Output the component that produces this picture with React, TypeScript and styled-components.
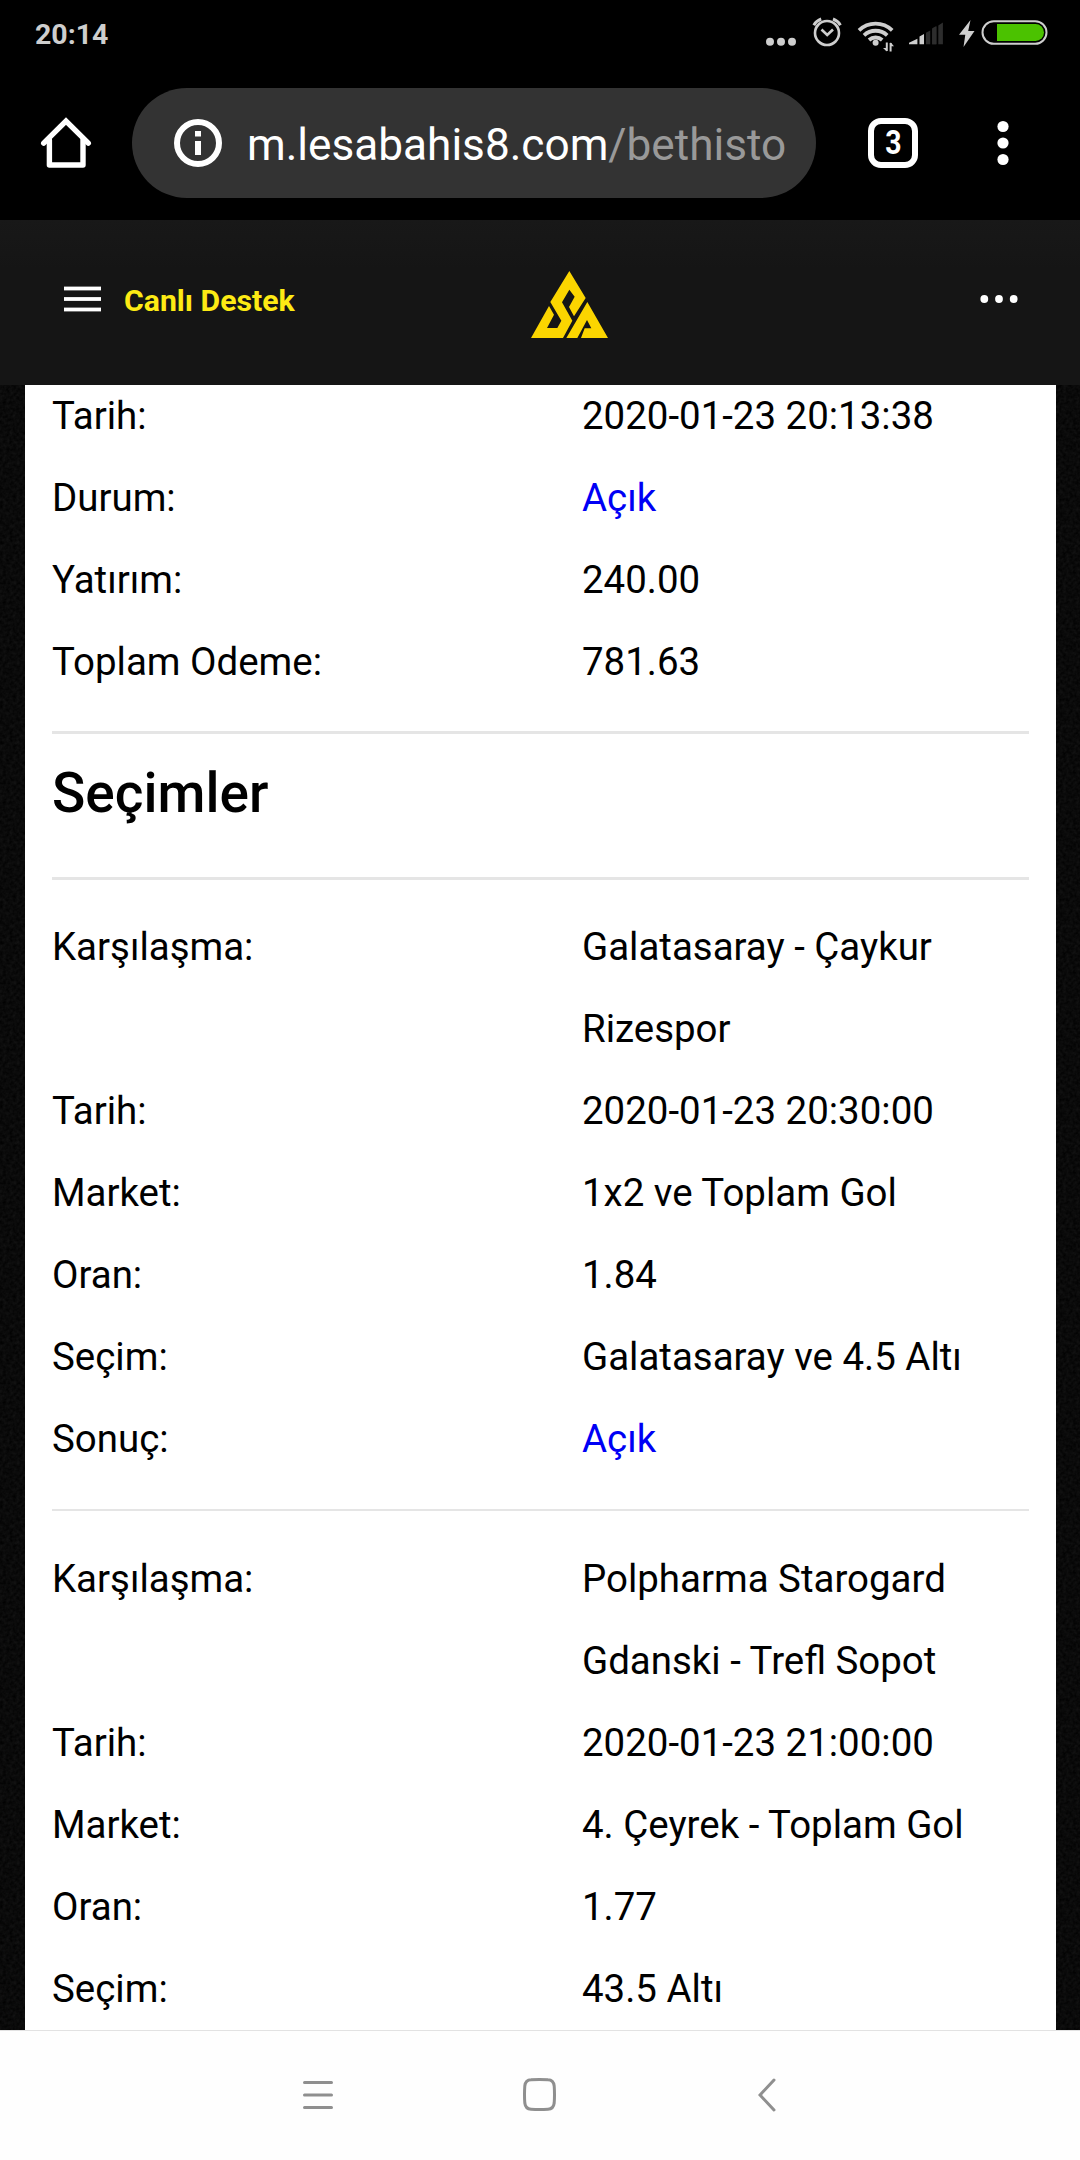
import React from "react";
import styled, { createGlobalStyle } from "styled-components";

const Global = createGlobalStyle`
  * { box-sizing: border-box; }
  html, body { margin: 0; background: #000; }
  body { font-family: Roboto, "Noto Sans", sans-serif; overflow: hidden; }
  svg { display: block; flex: none; }
`;

const grain = encodeURIComponent(
  `<svg xmlns="http://www.w3.org/2000/svg" width="200" height="200"><filter id="n" x="0" y="0" width="100%" height="100%" color-interpolation-filters="sRGB"><feTurbulence type="fractalNoise" baseFrequency="0.3" numOctaves="2" stitchTiles="stitch"/><feColorMatrix values="0.09 0 0 0 -0.006  0.09 0 0 0 -0.006  0.09 0 0 0 -0.006  0 0 0 0 1"/></filter><rect width="200" height="200" filter="url(#n)"/></svg>`
);

const Screen = styled.div`
  width: 1080px;
  height: 2160px;
  display: flex;
  flex-direction: column;
  overflow: hidden;
  background: #000;
`;

const StatusBar = styled.div`
  height: 66px;
  flex: none;
  display: flex;
  justify-content: space-between;
  align-items: center;
  padding: 2px 32px 0 35px;
  color: #cecece;
`;

const Clock = styled.span`
  font-size: 28.5px;
  font-weight: 700;
  line-height: 34px;
  padding-top: 1px;
`;

const BrowserBar = styled.div`
  height: 154px;
  flex: none;
  display: flex;
  align-items: flex-start;
  padding: 22px 0 0 40px;
`;

const IconSlot = styled.div<{ $ml?: number }>`
  height: 110px;
  display: flex;
  align-items: center;
  margin-left: ${(p) => p.$ml ?? 0}px;
`;

const UrlPill = styled.div`
  width: 684px;
  height: 110px;
  margin-left: 40px;
  border-radius: 55px;
  background: #333;
  display: flex;
  align-items: center;
  padding-left: 42px;
`;

const Url = styled.span`
  margin-left: 25px;
  padding-top: 3px;
  font-size: 44.15px;
  line-height: 60px;
  white-space: nowrap;
  color: #fff;
`;

const UrlPath = styled.span`
  color: #999;
`;

const TabCount = styled.div`
  width: 50px;
  height: 50px;
  border: 6px solid #fff;
  border-radius: 13px;
  display: flex;
  align-items: center;
  justify-content: center;
  color: #fff;
  font-size: 33px;
  font-weight: 700;
  line-height: 38px;
`;

const TabDigit = styled.span`
  transform: scaleX(0.86);
`;

const SiteHeader = styled.header`
  height: 165px;
  flex: none;
  display: flex;
  align-items: center;
  background: linear-gradient(#181818, #151515 30%, #151515);
  padding: 0 62px 7px 64px;
`;

const HeaderSide = styled.div<{ $end?: boolean }>`
  flex: 1;
  display: flex;
  align-items: center;
  justify-content: ${(p) => (p.$end ? "flex-end" : "flex-start")};
`;

const Support = styled.span`
  margin-left: 23px;
  color: #fdea14;
  font-size: 30.2px;
  font-weight: 700;
  line-height: 36px;
  padding-top: 3px;
`;

const LogoBox = styled.div`
  padding: 12px 0 0 0;
  margin-left: 58px;
`;

const Page = styled.main`
  flex: 1;
  min-height: 0;
  overflow: hidden;
  padding: 0 24px 0 25px;
  background: #0a0a0a url("data:image/svg+xml,${grain}");
`;

const Slip = styled.div`
  height: 100%;
  background: #fff;
  padding: 0 27px;
  color: #000;
  overflow: hidden;
`;

const Group = styled.dl<{ $top?: number }>`
  margin: ${(p) => p.$top ?? 0}px 0 0;
`;

const Row = styled.div`
  display: grid;
  grid-template-columns: 530px 1fr;
  font-size: 38.45px;
  line-height: 82px;
`;

const Label = styled.dt`
  margin: 0;
`;

const Value = styled.dd<{ $open?: boolean }>`
  margin: 0;
  padding-right: 30px;
  color: ${(p) => (p.$open ? "#0000f5" : "#000")};
`;

const Rule = styled.hr<{ $top: number; $h?: number }>`
  margin: ${(p) => p.$top}px 0 0;
  border: 0;
  height: ${(p) => p.$h ?? 3}px;
  background: #e5e5e5;
`;

const Title = styled.h2`
  margin: 26px 0 0;
  font-size: 55px;
  font-weight: 500;
  line-height: 66px;
`;

const NavBar = styled.nav`
  height: 130px;
  flex: none;
  border-top: 1px solid #e2e2e2;
  background: #fefefe;
  display: flex;
  align-items: center;
  padding: 0 0 2px 303px;
`;

const NavButton = styled.div<{ $ml?: number }>`
  margin-left: ${(p) => p.$ml ?? 0}px;
`;

type Item = { label: string; value: React.ReactNode; open?: boolean };

const summary: Item[] = [
  { label: "Tarih:", value: "2020-01-23 20:13:38" },
  { label: "Durum:", value: "Açık", open: true },
  { label: "Yatırım:", value: "240.00" },
  { label: "Toplam Odeme:", value: "781.63" },
];

const first: Item[] = [
  { label: "Karşılaşma:", value: <>Galatasaray - Çaykur<br />Rizespor</> },
  { label: "Tarih:", value: "2020-01-23 20:30:00" },
  { label: "Market:", value: "1x2 ve Toplam Gol" },
  { label: "Oran:", value: "1.84" },
  { label: "Seçim:", value: "Galatasaray ve 4.5 Altı" },
  { label: "Sonuç:", value: "Açık", open: true },
];

const second: Item[] = [
  { label: "Karşılaşma:", value: <>Polpharma Starogard<br />Gdanski - Trefl Sopot</> },
  { label: "Tarih:", value: "2020-01-23 21:00:00" },
  { label: "Market:", value: "4. Çeyrek - Toplam Gol" },
  { label: "Oran:", value: "1.77" },
  { label: "Seçim:", value: "43.5 Altı" },
];

const Rows = ({ items, top }: { items: Item[]; top?: number }) => (
  <Group $top={top}>
    {items.map((it) => (
      <Row key={it.label}>
        <Label>{it.label}</Label>
        <Value $open={it.open}>{it.value}</Value>
      </Row>
    ))}
  </Group>
);

const StatusIcons = () => (
  <svg width="284" height="40" viewBox="764 14 284 40" fill="none">
    <g fill="#cecece">
      <circle cx="770" cy="41.7" r="4" />
      <circle cx="781" cy="41.7" r="4" />
      <circle cx="792" cy="41.7" r="4" />
    </g>
    <g stroke="#cecece" strokeWidth="2.6">
      <circle cx="827" cy="33" r="12" />
      <path d="M821.5 29.5l5.7 5.5 5.8-5.5" />
      <path d="M813.8 25.2q2.6-4.5 7.4-6.2M840.4 25.2q-2.6-4.500-7.400-6.200" strokeWidth="3" />
    </g>
    <g stroke="#cecece" strokeWidth="3.8">
      <path d="M859 30.3a24 24 0 0 1 33.2 0" />
      <path d="M864 35.3a17 17 0 0 1 23.2 0" />
      <path d="M869 40a10 10 0 0 1 13.2 0" />
    </g>
    <circle cx="875.6" cy="42.7" r="3" fill="#cecece" />
    <path d="M886.8 51V42.5M890.6 51.5V43" stroke="#cecece" strokeWidth="2" />
    <path d="M883 48h3.8v3.5zM890.6 42.3v4h3.4z" fill="#cecece" />
    <path d="M909 44.3v-1.6l8.4-4v5.6zM919.5 44.3v-7.8l4.5-2.4v10.2z" fill="#cecece" />
    <path d="M926 44.3V32.8l4.2-2.3v13.800zM932.2 44.3V29.200l4.200-2.300v17.400zM938.400 44.300" fill="#2d2d2d" />
    <path d="M932.2 44.3V28.200l4.200-2.300v18.400zM938.300 44.300V25.400l4.600-2.900v21.800z" fill="#2d2d2d" />
    <path d="M970.5 20L959 34.8h6.3L963.5 47 974.5 31h-6.3z" fill="#cecece" />
    <rect x="982.5" y="21.2" width="64" height="22.6" rx="11.3" stroke="#cecece" strokeWidth="2" />
    <path d="M997 24h38.5a8.5 8.5 0 0 1 0 17H997z" fill="#4bc200" />
  </svg>
);

const HomeIcon = () => (
  <svg width="52" height="52" viewBox="40 117 52 52" fill="none" stroke="#fff" strokeWidth="5.4" strokeLinejoin="round" strokeLinecap="round">
    <path d="M43.7 143.2L66 121l22.3 22.2" strokeLinejoin="miter" />
    <path d="M49.4 140v25H83v-25" />
  </svg>
);

const InfoIcon = () => (
  <svg width="48" height="48" viewBox="0 0 48 48" fill="none">
    <circle cx="24" cy="24" r="21" stroke="#fff" strokeWidth="6" />
    <path d="M24 12v5.4M24 22v14" stroke="#fff" strokeWidth="6" />
  </svg>
);

const MoreIcon = () => (
  <svg width="12" height="46" viewBox="0 0 12 46" fill="#fff">
    <circle cx="6" cy="6.5" r="5.6" />
    <circle cx="6" cy="23" r="5.6" />
    <circle cx="6" cy="39.5" r="5.6" />
  </svg>
);

const MenuIcon = () => (
  <svg width="37" height="26" viewBox="0 0 37 26" fill="#fff">
    <rect y="0.6" width="37" height="3.8" />
    <rect y="11.1" width="37" height="3.8" />
    <rect y="21.6" width="37" height="3.8" />
  </svg>
);

const DotsIcon = () => (
  <svg width="38" height="10" viewBox="0 0 38 10" fill="#fff">
    <circle cx="4.3" cy="5" r="3.9" />
    <circle cx="19" cy="5" r="3.9" />
    <circle cx="33.7" cy="5" r="3.9" />
  </svg>
);

const Logo = () => (
  <svg width="78" height="68" viewBox="93 93 234 204" fill="#fbd500">
    <path d="M208 93L257 174 222 229 207 201 224 170 208 149 186 187 217 242 189 294H93L147 198 162 224 141 264H172L184 242 151 186Z" />
    <path d="M262 186L324 294H243L254 265H274L261 240 232 294H199Z" />
  </svg>
);

export default function App() {
  return (
    <Screen>
      <Global />
      <StatusBar>
        <Clock>20:14</Clock>
        <StatusIcons />
      </StatusBar>
      <BrowserBar>
        <IconSlot><HomeIcon /></IconSlot>
        <UrlPill>
          <InfoIcon />
          <Url>m.lesabahis8.com<UrlPath>/bethisto</UrlPath></Url>
        </UrlPill>
        <IconSlot $ml={52}><TabCount><TabDigit>3</TabDigit></TabCount></IconSlot>
        <IconSlot $ml={79}><MoreIcon /></IconSlot>
      </BrowserBar>
      <SiteHeader>
        <HeaderSide>
          <MenuIcon />
          <Support>Canlı Destek</Support>
        </HeaderSide>
        <LogoBox><Logo /></LogoBox>
        <HeaderSide $end><DotsIcon /></HeaderSide>
      </SiteHeader>
      <Page>
        <Slip>
          <Rows items={summary} top={-10} />
          <Rule $top={28} />
          <Title>Seçimler</Title>
          <Rule $top={51} />
          <Rows items={first} top={26} />
          <Rule $top={29} $h={2} />
          <Rows items={second} top={27} />
        </Slip>
      </Page>
      <NavBar>
        <NavButton>
          <svg width="30" height="30" viewBox="0 0 30 30" stroke="#8f8f8f" strokeWidth="3" strokeLinecap="round">
            <path d="M1.5 2.5h27M1.5 15h27M1.5 27.5h27" />
          </svg>
        </NavButton>
        <NavButton $ml={190}>
          <svg width="33" height="33" viewBox="0 0 33 33" fill="none" stroke="#8f8f8f" strokeWidth="3">
            <path d="M8 1.8Q16.5 1.2 25 1.8Q30.5 2 31.2 8Q31.8 16.5 31.2 25Q30.5 31 25 31.2Q16.5 31.8 8 31.2Q2.5 31 1.8 25Q1.2 16.5 1.8 8Q2.5 2 8 1.8Z" />
          </svg>
        </NavButton>
        <NavButton $ml={202}>
          <svg width="18" height="34" viewBox="0 0 18 34" fill="none" stroke="#8f8f8f" strokeWidth="3" strokeLinecap="round">
            <path d="M16 2L2 17l14 15" />
          </svg>
        </NavButton>
      </NavBar>
    </Screen>
  );
}
